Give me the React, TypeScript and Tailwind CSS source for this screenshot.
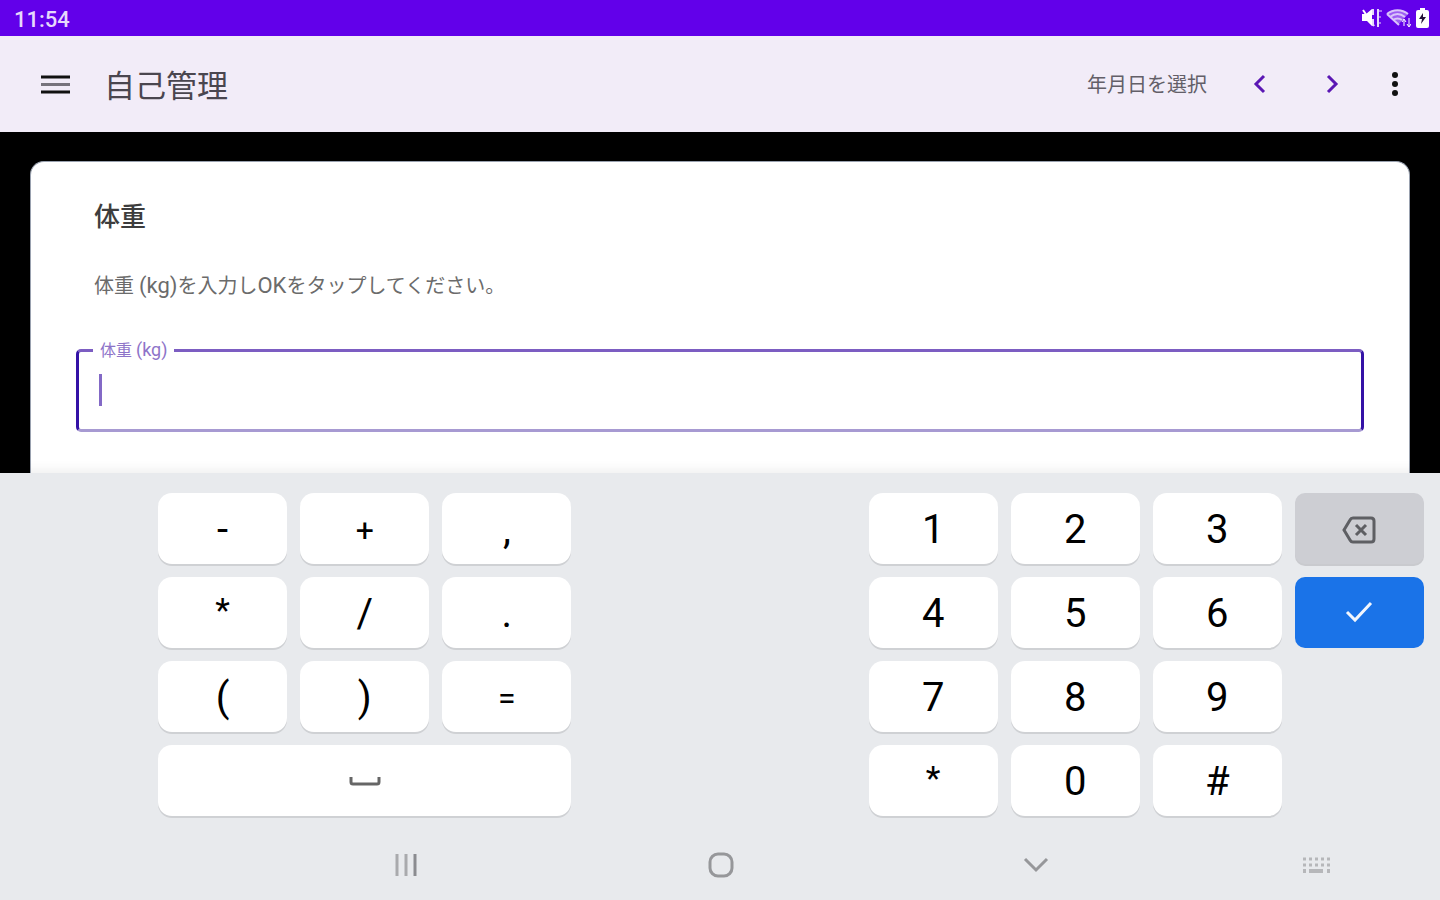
import { ReactNode } from "react";

type KeyProps = {
    label: string;
    children: ReactNode;
    className?: string;
};

const whiteKey = "rounded-[14px] bg-white text-black shadow-[0_2px_0_#cfd1d4]";

const symbolRows = [
    ["-", "+", ","],
    ["*", "/", "."],
    ["(", ")", "="],
];

const numberRows = [
    ["1", "2", "3"],
    ["4", "5", "6"],
    ["7", "8", "9"],
    ["*", "0", "#"],
];

function Key({ label, children, className = whiteKey }: KeyProps) {
    return (
        <button type="button" aria-label={label} className={"flex h-[71px] items-center justify-center pt-[2px] text-[40px] leading-none " + className}>
            {children}
        </button>
    );
}

function KeyText({ text }: { text: string }) {
    // operators are drawn smaller than the digits
    if (text === "*") return <span className="pb-2 text-[34px] leading-10">{text}</span>;
    if (text === "+" || text === "=") return <span className="text-[32px] leading-10">{text}</span>;
    return <span className="leading-10">{text}</span>;
}

function StatusBar() {
    return (
        <div className="flex h-9 shrink-0 items-center justify-between bg-[#6200ea] pl-[14px] pr-[10px] pt-1 text-white">
            <span className="text-[22px] leading-7 font-medium text-[#e6d8fc]">11:54</span>
            <div className="flex items-center gap-1 pb-1">
                <svg width="21" height="22" viewBox="0 0 21 22" fill="none" stroke="#e6d8fc" strokeWidth="2">
                    <path d="M1 7h4l6-5v17l-5-5H1z" fill="#fff" stroke="none" />
                    <path d="M2 3l11 16" stroke="#fff" />
                    <path d="M12 2v6M12 12v7M17 2v18" />
                    <path d="M17 4h4M17 10h3M17 16h3" strokeWidth="1" />
                </svg>
                <svg width="25" height="22" viewBox="0 0 25 22" fill="none" stroke="#d9c4fa" strokeWidth="2">
                    <path d="M1 7c6-5 15-5 21 0L12 18z" fill="#9d5df3" stroke="none" />
                    <path d="M1 7c6-5 15-5 21 0M4 10c5-4 10-4 15 0M7 13c3-2 6-2 9 0M1 7l12 11" />
                    <path d="M18 19v-6M16 15l2-3 2 3M23 11v8M21 17l2 3 2-3" stroke="#fff" strokeWidth="1" />
                </svg>
                <svg width="15" height="22" viewBox="0 0 15 22">
                    <path d="M5 1h5v2h2q2 0 2 2v14q0 2-2 2H3q-2 0-2-2V5q0-2 2-2h2z" fill="#fff" />
                    <path d="M8 6l-4 6h3l-1 5 5-7H8z" fill="#241238" />
                </svg>
            </div>
        </div>
    );
}

function AppBar() {
    return (
        <header className="flex h-24 shrink-0 items-center justify-between bg-[#f2ecf8] px-10">
            <div className="flex items-center gap-8">
                <button type="button" aria-label="メニュー">
                    <svg width="32" height="24" viewBox="0 0 32 24" stroke="#111" strokeWidth="3">
                        <path d="M1 5h29M1 20h29" />
                        <path d="M1 12.500h29" stroke="#77737c" />
                    </svg>
                </button>
                <h1 className="pt-[6px] text-[31px] leading-10 text-[#4a464f]">自己管理</h1>
            </div>
            <div className="flex items-center">
                <button type="button" className="mr-[41px] pt-[2px] text-xl leading-7 text-[#635f68]">年月日を選択</button>
                <button type="button" aria-label="前へ" className="mr-12">
                    <svg width="24" height="24" viewBox="0 0 24 24" fill="none" stroke="#5b17b4" strokeWidth="3">
                        <path d="M16 4l-8 8 8 8" />
                    </svg>
                </button>
                <button type="button" aria-label="次へ" className="mr-[46px]">
                    <svg width="24" height="24" viewBox="0 0 24 24" fill="none" stroke="#5b17b4" strokeWidth="3">
                        <path d="M8 4l8 8-8 8" />
                    </svg>
                </button>
                <button type="button" aria-label="その他">
                    <svg width="10" height="28" viewBox="0 0 10 28" fill="#111">
                        <circle cx="5" cy="5" r="3" />
                        <circle cx="5" cy="14" r="3" />
                        <circle cx="5" cy="23" r="3" />
                    </svg>
                </button>
            </div>
        </header>
    );
}

function WeightCard() {
    return (
        <section className="h-full rounded-t-[14px] border border-b-0 border-gray-400 bg-white px-[45px] pt-[35px]">
            <h2 className="px-[18px] text-[26px] leading-10 font-medium text-[#3d3d3d]">体重</h2>
            <p className="mt-[35px] px-[18px] text-xl leading-7 text-[#6b6b6b]">
                体重 <span className="text-[22px]">(kg)</span>を入力し<span className="text-[22px]">OK</span>をタップしてください。
            </p>
            <fieldset className="relative mt-[38px] rounded-[5px] border-[3px] border-x-[#3412a6] border-t-[#7c5dc2] border-b-[#a79ad2] px-[14px]">
                <legend className="h-6 px-[7px] text-base leading-6 text-[#8e74c9]">
                    <label htmlFor="weight">体重 <span className="text-lg leading-6">(kg)</span></label>
                </legend>
                <input id="weight" type="text" inputMode="decimal" className="block h-[67px] w-full px-[6px] text-2xl caret-transparent outline-none" />
                {/* text cursor */}
                <span className="absolute top-3 left-5 h-8 w-[3px] bg-[#8369c6]" />
            </fieldset>
        </section>
    );
}

function Keyboard() {
    return (
        <div className="relative shrink-0 bg-[#e8eaed] px-4 pt-5 pb-1 shadow-[0_-2px_12px_rgba(0,0,0,0.08)]">
            <div className="grid grid-cols-10 gap-[13px]">
                <div className="col-span-3 col-start-2 grid grid-cols-3 gap-[13px]">
                    {symbolRows.flat().map((key) => (
                        <Key key={key} label={key}><KeyText text={key} /></Key>
                    ))}
                    <Key label="スペース" className={"col-span-3 " + whiteKey}>
                        <svg width="32" height="12" viewBox="0 0 32 12" fill="none" stroke="#666" strokeWidth="3">
                            <path d="M2 1v5q0 2 2 2h24q2 0 2-2V1" />
                        </svg>
                    </Key>
                </div>
                <div className="col-span-3 col-start-7 grid grid-cols-3 gap-[13px]">
                    {numberRows.flat().map((key) => (
                        <Key key={key} label={key}><KeyText text={key} /></Key>
                    ))}
                </div>
                <div className="flex flex-col gap-[13px]">
                    <Key label="削除" className="rounded-[10px] bg-[#cdced3] shadow-[0_2px_0_#c9cace]">
                        <svg width="34" height="28" viewBox="0 0 34 28" fill="none" stroke="#5e5f63" strokeWidth="3">
                            <path d="M11 2h18q3 0 3 3v18q0 3-3 3H11q-2 0-3-2l-6-10 6-10q1-2 3-2z" />
                            <path d="M14 9l10 10M24 9L14 19" />
                        </svg>
                    </Key>
                    <Key label="OK" className="rounded-[10px] bg-[#1a73e8]">
                        <svg width="30" height="26" viewBox="0 0 30 26" fill="none" stroke="#f2f6fd" strokeWidth="3">
                            <path d="M3 11l8 8L27 2" />
                        </svg>
                    </Key>
                </div>
            </div>
        </div>
    );
}

function NavigationBar() {
    return (
        <nav className="relative grid h-20 shrink-0 grid-cols-[248fr_315fr_315fr_315fr_247fr] items-center justify-items-center bg-[#e8eaed] pt-[10px]">
            <button type="button" aria-label="履歴" className="col-start-2">
                <svg width="24" height="24" viewBox="0 0 24 24" stroke="#a9aaad" strokeWidth="3">
                    <path d="M3 1v22M12 1v22" />
                    <path d="M21 1v22" stroke="#8b8c90" />
                </svg>
            </button>
            <button type="button" aria-label="ホーム">
                <svg width="28" height="28" viewBox="0 0 28 28" fill="none" stroke="#96979a" strokeWidth="3">
                    <rect x="3" y="3" width="22" height="22" rx="8" />
                </svg>
            </button>
            <button type="button" aria-label="キーボードを閉じる">
                <svg width="26" height="20" viewBox="0 0 26 20" fill="none" stroke="#96979a" strokeWidth="3">
                    <path d="M2 4l11 11L24 4" />
                </svg>
            </button>
            <button type="button" aria-label="キーボード切替">
                <svg width="30" height="20" viewBox="0 0 30 20" stroke="#b6b7ba" strokeWidth="3">
                    <path d="M1 4h29M1 10h29" strokeDasharray="3 3" />
                    <path d="M1 16h3M7 16h14M25 16h3" strokeWidth="4" />
                </svg>
            </button>
        </nav>
    );
}

function App() {
    return (
        <div className="flex h-screen flex-col bg-black font-['Roboto','Noto_Sans_CJK_JP',sans-serif]" lang="ja">
            <StatusBar />
            <AppBar />
            <main className="min-h-0 flex-1 overflow-hidden px-[30px] pt-[29px]">
                <WeightCard />
            </main>
            <Keyboard />
            <NavigationBar />
        </div>
    );
}

export default App;
